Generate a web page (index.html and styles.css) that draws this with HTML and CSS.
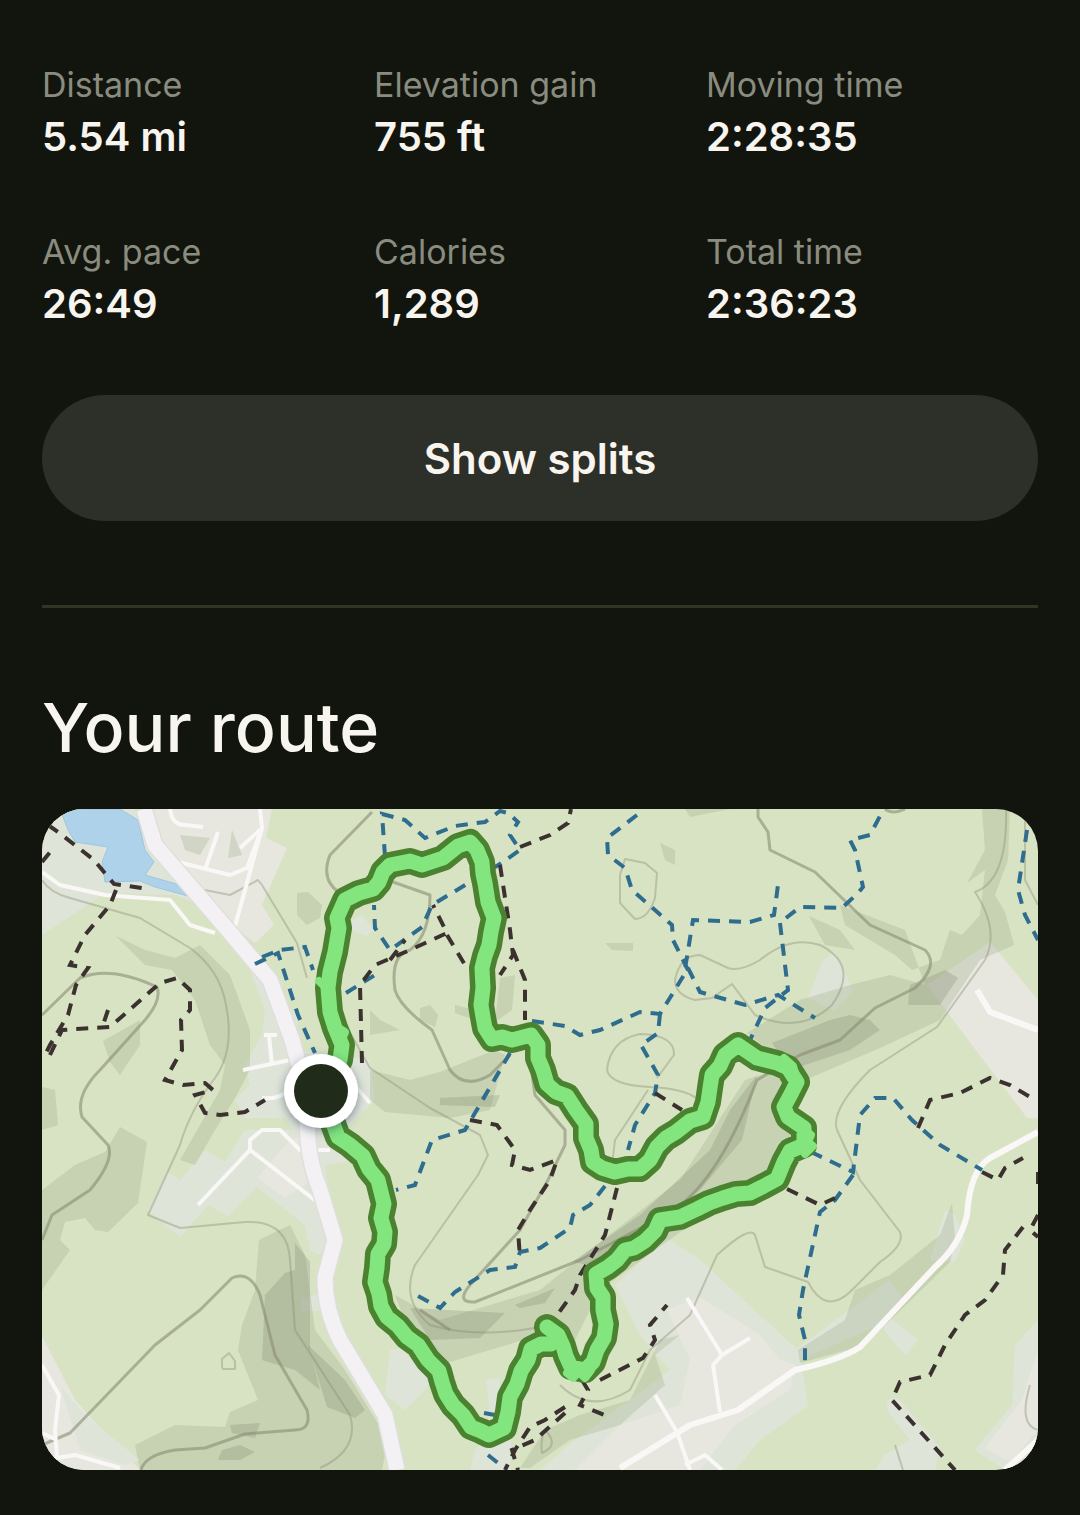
FILE: index.html
```html
<!DOCTYPE html>
<html lang="en">
<head>
<meta charset="utf-8">
<meta name="viewport" content="width=device-width, initial-scale=1">
<title>Activity</title>
<link rel="stylesheet" href="styles.css">
</head>
<body>
<main class="activity">
  <dl class="stats">
    <div class="stat"><dt>Distance</dt><dd>5.54 mi</dd></div>
    <div class="stat"><dt>Elevation gain</dt><dd>755 ft</dd></div>
    <div class="stat"><dt>Moving time</dt><dd>2:28:35</dd></div>
    <div class="stat"><dt>Avg. pace</dt><dd>26:49</dd></div>
    <div class="stat"><dt>Calories</dt><dd>1,289</dd></div>
    <div class="stat"><dt>Total time</dt><dd>2:36:23</dd></div>
  </dl>
  <button class="splits" type="button">Show splits</button>
  <hr class="divider">
  <section class="route">
    <h2>Your route</h2>
    <svg class="map" viewBox="42 809 996 661" role="img" aria-label="Map of your route">
      <defs>
        <filter id="marker-shadow" x="-50%" y="-50%" width="200%" height="200%">
          <feDropShadow dx="0" dy="3" stdDeviation="5" flood-color="#23364a" flood-opacity=".5"/>
        </filter>
        <path id="track" d="M321 1091 340 1060 342 1045 335 1028 330 1012 328 988 330 972 335 952 339 928 337 918 345 900 359 893 373 889 379 882 383 872 390 865 410 861 422 865 443 858 458 846 470 842 477 850 482 862 483 874 485 883 488 902 494 918 491 932 489 945 485 956 482 968 483 988 481 1005 483 1017 485 1028 492 1039 502 1037 512 1040 531 1035 538 1045 538 1058 543 1070 547 1084 556 1092 567 1096 576 1110 586 1124 586 1138 591 1150 593 1162 602 1168 615 1172 628 1169 640 1169 650 1160 657 1147 666 1138 676 1132 690 1121 703 1117 708 1102 710 1088 712 1075 720 1066 725 1055 738 1045 757 1058 777 1063 788 1068 797 1082 791 1094 784 1107 788 1117 804 1128 804 1145 790 1151 784 1162 777 1179 764 1186 750 1193 736 1194 723 1198 709 1203 697 1209 680 1217 660 1220 655 1231 645 1241 634 1248 625 1250 617 1260 608 1267 596 1274 597 1288 603 1297 603 1310 606 1324 604 1338 597 1350 593 1362 585 1370 571 1367 566 1356 563 1346 558 1335 547 1327M551 1344 541 1344 531 1349 528 1360 521 1371 517 1384 510 1397 508 1412 504 1428 489 1435 481 1431 471 1427 463 1415 453 1405 446 1394 442 1382 439 1371 428 1360 418 1345 407 1337 398 1326 387 1317 381 1306 379 1294 375 1282 377 1268 378 1254 384 1244 385 1232 381 1218 384 1204 381 1192 378 1180 369 1169 363 1156 350 1145 338 1137 321 1091"/>
      </defs>
      <rect class="land" x="42" y="809" width="996" height="661"/>

      <!-- built-up areas -->
      <g class="town">
        <path d="M42 809H135L150 850 200 905 175 895 105 893 42 935Z"/>
        <path class="built" d="M150 809H272L266 838 287 848 262 905 274 925 255 943 232 925 195 880 165 845Z"/>
        <path d="M230 945 262 958 275 990 298 1018 295 1050 370 1060 375 1100 340 1135 300 1140 285 1118 245 1118 235 1100 250 1085 245 1065 262 1035 265 1010 250 970Z"/>
        <path d="M245 1130 345 1130 370 1150 372 1158 325 1165 330 1200 335 1235 320 1255 310 1250 305 1225 257 1187 228 1216 208 1205 180 1237 148 1210 168 1172 180 1181 205 1150 225 1162Z"/>
        <path class="built" d="M290 1140 310 1135 312 1180 285 1198 257 1178Z"/>
        <path d="M301 1298 325 1293 327 1310 301 1312Z"/>
        <path class="built" d="M42 1336 75 1400 90 1417 140 1470H42Z"/>
        <path d="M60 1385 85 1415 140 1460 125 1465 80 1450Z"/>
        <path d="M390 1350 400 1348 430 1375 430 1385 405 1410 385 1395Z"/>
        <path d="M486 1380 500 1378 497 1410 512 1430 510 1470H470L475 1450 492 1430Z"/>
        <path d="M615 1285 667 1238 700 1260 800 1352 808 1406 760 1440 735 1470H540L575 1440 670 1370 640 1335Z"/>
        <path class="built" d="M667 1310 700 1297 760 1335 780 1360 795 1365 790 1390 735 1425 700 1470H575L620 1425 680 1405 690 1360Z"/>
        <path d="M835 951 853 991 835 1011 808 998 822 962Z"/>
        <path class="built" d="M927 985 990 942 1038 1000V1118L1027 1118Z"/>
        <path d="M1038 1320 1015 1345 1012 1405 975 1450 1005 1470H1038Z"/>
        <path class="built" d="M1038 1350 1022 1400 985 1448 1010 1462 1038 1430Z"/>
        <path d="M887 1400 898 1398 925 1430 940 1448 935 1470H875L885 1455 910 1440 887 1410Z"/>
        <path d="M860 1302 888 1280 905 1300 890 1318 918 1340 905 1355 880 1325 800 1360 795 1350Z"/>
        <path d="M945 1210 955 1215 965 1240 955 1262 930 1260Z"/>
        <path d="M352 920 362 915 373 930 366 936 352 930Z"/>
      </g>

      <!-- steep ground -->
      <g class="slope">
        <path d="M116 936 145 950 175 958 200 945 230 975 250 1030 250 1070 235 1098 215 1130 195 1165 180 1160 220 1090 225 1065 210 1045 195 1000 172 970 145 965Z"/>
        <path d="M42 1087 55 1090 58 1125 42 1130ZM103 1041 140 1020 140 1045 120 1075 110 1062ZM297 893 308 892 322 905 320 918 307 925 297 915Z"/>
        <path d="M120 1127 147 1142 138 1203 108 1232 95 1230 85 1218 65 1222 60 1240 70 1250 42 1290V1190L75 1165 105 1152Z"/>
        <path d="M259 1240 290 1225 305 1255 315 1330 345 1370 388 1440 382 1470H140L135 1445 175 1425 225 1427 230 1412 258 1400 238 1350 242 1325 255 1290Z"/>
        <path d="M370 1035 400 1030 380 1020 370 1010ZM420 1008 430 1005 438 1015 435 1027 420 1020ZM455 1005 475 1010 480 1022 455 1013Z"/>
        <path d="M370 1070 410 1080 440 1072 495 1050 505 1055 490 1110 450 1118 385 1112 370 1100Z"/>
        <path d="M500 978 515 975 512 1010 495 1022Z"/>
        <path d="M395 1295 440 1320 540 1290 590 1250 680 1180 745 1080 790 1065 785 1115 800 1140 750 1190 690 1225 600 1290 575 1340 540 1335 440 1365 410 1335Z"/>
        <path d="M747 1033 800 1000 850 985 890 975 925 985 905 930 840 905 845 925 895 955 912 970 940 960 950 930 962 935 980 915 985 870 967 883 985 850 982 809H1010L1008 860 995 895 1005 912 1014 945 980 960 940 1020 880 1048 805 1080Z"/>
        <path d="M809 916 840 930 855 950 825 945ZM605 943 633 943 633 951 612 950ZM660 843 675 850 675 865 665 860ZM685 809H730L690 817Z"/>
        <path d="M855 1290 890 1275 940 1235 952 1203 955 1240 950 1262 865 1345 800 1363 798 1350 845 1320Z"/>
        <path d="M630 1400 660 1340 680 1335 655 1355 665 1385 620 1425 570 1440 530 1468H520L545 1430 580 1415Z"/>
        <path d="M180 835 210 838 200 855 185 850ZM232 830 242 855 228 858Z"/>
      </g>
      <g class="slope-deep">
        <path d="M295 1243 310 1262 310 1350 320 1390 295 1370 262 1360 265 1295 285 1273 295 1270Z"/>
        <path d="M308 1345 345 1380 365 1410 355 1418 327 1407ZM230 1425 260 1423 255 1438 232 1433ZM222 1450 240 1445 255 1452 240 1460 218 1460Z"/>
        <path d="M410 1308 505 1313 480 1338 430 1340ZM515 1305 555 1288 545 1303 520 1308ZM440 1098 500 1095 495 1107 440 1105Z"/>
        <path d="M572 1262 640 1215 710 1150 730 1110 757 1075 742 1140 700 1190 640 1240 590 1265Z"/>
        <path d="M772 1043 830 1020 850 1015 870 1020 880 1030 850 1050 790 1070ZM910 985 945 970 958 978 940 1005 908 1005Z"/>
      </g>

      <!-- lakes -->
      <path class="water" d="M60 809H120L138 820 145 850 154 862 145 875 180 885 188 896 155 887 140 881 105 882 102 862 108 847 75 842 68 830Z"/>

      <!-- height lines -->
      <g class="contour">
        <path d="M42 880Q50 893 70 898L140 918 190 948Q220 970 226 1005Q235 1050 215 1078Q190 1110 180 1145L148 1215 180 1228 245 1222Q288 1220 290 1260L295 1330 350 1415Q360 1450 320 1468"/>
        <path d="M180 885 230 895 258 880 262 885 297 943 307 978"/>
        <path d="M340 1015 370 1068 430 1108 480 1135 488 1155 478 1175 415 1265Q400 1300 430 1325Q480 1340 550 1325"/>
        <path d="M625 859 645 863 657 873 655 898Q648 919 635 919L620 903V875Z"/>
        <path d="M607 1070Q610 1040 640 1034 675 1035 674 1055L657 1078M607 1070Q610 1085 650 1087 720 1090 700 1130M648 1090 615 1140 612 1165"/>
        <path d="M675 980Q680 955 700 955L728 968Q740 972 760 960 790 935 820 945 860 965 832 1005 800 1035 755 1015L732 984 712 998 695 1000Q675 995 675 980Z"/>
        <path d="M1006 809Q1008 880 975 892 1000 930 985 960L937 1027 870 1070Q830 1110 837 1130L860 1180 900 1232Q905 1245 880 1262L850 1292Q825 1315 808 1282L765 1267 755 1235Q750 1225 717 1255L690 1315 650 1350 630 1390Q590 1415 560 1385"/>
        <path d="M1025 809V880L1038 905M1030 1385Q1018 1425 1038 1430M895 1445 903 1470M545 1430Q560 1445 542 1453 540 1440 545 1430"/>
        <path d="M222 1367V1359L229 1353 235 1361V1369H223Z"/>
      </g>
      <g class="contour major">
        <path d="M42 1015 80 978Q110 965 157 987 162 1000 145 1020L100 1070Q75 1095 82 1117L108 1145Q115 1160 90 1190L52 1215 42 1240"/>
        <path d="M42 1445 70 1433 155 1345 200 1310 232 1278Q250 1270 260 1295L275 1355 307 1410Q312 1430 295 1430L245 1434 205 1448 175 1450Q145 1455 141 1470"/>
        <path d="M372 812 330 855Q320 880 340 893M393 882 430 895Q430 935 410 950 390 955 395 990 400 1007 432 1030L450 1070Q465 1090 490 1075L510 1055"/>
        <path d="M530 1060 535 1095 565 1130V1145L548 1180 520 1230 470 1285Q455 1303 475 1302L580 1260 665 1215Q715 1190 757 1080L800 1055 840 1040 875 1008 915 988Q940 965 925 950L870 925 815 872 770 850 768 832 758 817V809"/>
        <path d="M885 809Q893 815 905 809M420 1310 450 1330"/>
      </g>

      <!-- roads -->
      <g class="road">
        <path d="M42 872 60 885 105 895 170 900 190 925 215 933M170 860 230 875 247 868 262 828M260 809 262 828 234 930M170 809Q172 825 185 825L203 827M206 867 218 832M260 830 240 848"/>
        <path d="M264 1035H277M269 1035 272 1065M243 1070 290 1060M262 1098Q280 1100 288 1090M350 1080 370 1103M198 1205 250 1150 250 1140 262 1130H280L300 1150H330M250 1150 325 1208"/>
        <path d="M42 1365 59 1395 55 1430 57 1458 75 1455 120 1468M42 1433 57 1440"/>
        <path class="lane" d="M1038 1132 990 1158Q970 1170 967 1215 960 1245 935 1267L860 1347Q840 1360 795 1370L738 1410 690 1425 620 1468"/>
        <path class="lane" d="M977 990 990 1012 1038 1030M1038 1440 1005 1470"/>
        <path d="M687 1298 722 1355 750 1338M722 1355 713 1365 720 1412M655 1395 677 1432 690 1470M685 1465 705 1455 722 1470"/>
      </g>
      <path class="highway edge" d="M144 809 155 845 228 930 270 980 292 1040 306 1091 308 1140Q310 1165 320 1190L335 1240 325 1278Q325 1310 340 1340L385 1415 397 1470"/>
      <path class="highway" d="M144 809 155 845 228 930 270 980 292 1040 306 1091 308 1140Q310 1165 320 1190L335 1240 325 1278Q325 1310 340 1340L385 1415 397 1470"/>

      <!-- bridleways -->
      <g class="path bridle">
        <path d="M255 964 278 953 298 1015 315 1053M262 957 280 950 305 947 313 970M346 993 375 975"/>
        <path d="M385 856 382 814 405 820 425 838 455 826 485 822 500 811 508 813 518 822 510 835 520 850 500 864 432 905 422 927 390 950 375 928 374 905"/>
        <path d="M532 1021 565 1026 580 1035 600 1030 640 1012 660 1014 684 975 693 920 750 922 774 915 778 885M660 1014 658 1033 641 1045 658 1075 655 1093 635 1125 628 1150M688 968 700 992 745 1005 778 995 815 1018M688 970 673 940 672 925 632 890 625 868 608 855 607 838 637 815V809"/>
        <path d="M780 923 788 990 765 1008 750 1040M786 918 800 907 842 908 858 893 863 887 855 850 850 840 870 835 880 816"/>
        <path d="M1027 830 1018 890 1025 915 1038 940"/>
        <path d="M510 1053 465 1130 432 1140 415 1185 396 1190M605 1186 590 1205 573 1215 570 1228 540 1248 520 1252 515 1267 490 1270 455 1292 440 1308 418 1296"/>
        <path d="M811 1152 853 1172 860 1115 875 1098 893 1098 912 1120 940 1145 982 1170M853 1175 835 1200 820 1212 803 1290 799 1315 805 1340V1367M484 1413 495 1415M488 1455 498 1463"/>
      </g>

      <!-- footpaths -->
      <g class="path foot">
        <path d="M42 862 55 846M48 825 58 832 94 860 114 884 148 889M116 890 110 905 85 935 70 965 88 968 76 985 68 1015 50 1045 45 1055M50 1055 62 1030 110 1027 160 983 177 978 190 990 190 1010 181 1020 182 1050 165 1080 183 1085 205 1083 213 1090 195 1095 205 1113 220 1115 245 1112 265 1100M108 1010 103 1025"/>
        <path d="M362 1063 360 985 375 965 410 950 447 933 433 905M447 935 468 970M390 960 405 940M500 865 510 930 513 955 500 975M513 950 525 980V1020M520 847 550 835 568 823 571 809"/>
        <path d="M470 1120 497 1125 515 1150 512 1165 530 1170 557 1160 550 1180 530 1210 518 1230 520 1258M617 1188 605 1235 580 1275 575 1290 550 1325M655 1093 682 1110"/>
        <path d="M600 1380 643 1358 655 1340 650 1325 667 1305M582 1380 588 1390 580 1405 607 1416M565 1407 545 1420 530 1427 515 1450 505 1470M565 1413 535 1440 512 1450 518 1470"/>
        <path d="M787 1189 820 1205 835 1198M918 1128 930 1100 960 1093 990 1078 1010 1085 1035 1100M982 1172 998 1180 1005 1168 1023 1158M1038 1172V1190M1038 1215 1030 1230 1038 1237M1023 1227 1005 1250 1003 1275 985 1300 965 1315 945 1345 930 1375 900 1382 892 1400 955 1470"/>
      </g>

      <!-- recorded track -->
      <g class="track">
        <use href="#track" class="casing"/>
        <use href="#track" class="line"/>
        <path class="spur" d="M784 1058 793 1066 795 1073M803 1128 811 1135 808 1142 813 1146 805 1154M567 1373 573 1378 579 1372 585 1378 591 1370M319 981 326 988M339 1028 345 1032 341 1042"/>
      </g>
      <circle class="marker-ring" cx="321" cy="1091" r="37" filter="url(#marker-shadow)"/>
      <circle class="marker-dot" cx="321" cy="1091" r="27"/>
    </svg>
  </section>
</main>
</body>
</html>
```
FILE: styles.css
```css
* {
  box-sizing: border-box;
}

body {
  margin: 0;
  background: #12140e;
  color: #f8f4ee;
  font-family: Inter, "Open Sans", sans-serif;
}

.activity {
  padding: 61px 42px 45px;
}

.stats {
  display: grid;
  grid-template-columns: repeat(3, 1fr);
  row-gap: 63px;
  margin: 0;
}

.stat dt {
  color: #898c7e;
  font-size: 34px;
  line-height: 48px;
}

.stat dd {
  margin: 0;
  font-size: 40px;
  font-weight: 600;
  line-height: 56px;
}

.splits {
  display: block;
  width: 100%;
  height: 126px;
  margin-top: 63px;
  border: 0;
  border-radius: 63px;
  background: #2d2f29;
  color: inherit;
  font-family: inherit;
  font-size: 42px;
  font-weight: 600;
}

.divider {
  height: 3px;
  margin: 84px 0 77px;
  border: 0;
  background: #323426;
}

.route h2 {
  margin: 0 0 40px;
  font-size: 68px;
  font-weight: 500;
  line-height: 84px;
}

.map {
  display: block;
  width: 100%;
  height: auto;
  border-radius: 42px;
}

.land {
  fill: #d8e3c4;
}

.town path {
  fill: #dfe4d9;
}

.town .built {
  fill: #e7e7df;
}

.slope {
  fill: #8f9f7c;
  fill-opacity: 0.25;
}

.slope-deep {
  fill: #7d8069;
  fill-opacity: 0.25;
}

.water {
  fill: #aed2ea;
  stroke: #9cc6df;
}

.contour {
  fill: none;
  stroke: #8b8c73;
  stroke-opacity: 0.4;
  stroke-width: 2;
  stroke-linejoin: round;
}

.contour.major {
  stroke-opacity: 0.6;
  stroke-width: 3;
}

.road {
  fill: none;
  stroke: #f9f8f7;
  stroke-width: 4;
  stroke-linejoin: round;
}

.road .lane {
  stroke-width: 6;
}

.highway {
  fill: none;
  stroke: #f3f1f3;
  stroke-width: 15;
  stroke-linejoin: round;
}

.highway.edge {
  stroke: #dedfda;
  stroke-width: 18;
}

.path {
  fill: none;
  stroke-width: 4;
  stroke-dasharray: 12 9;
}

.bridle {
  stroke: #2f6d8e;
}

.foot {
  stroke: #3b3230;
}

.track {
  fill: none;
  stroke-linejoin: round;
  stroke-linecap: round;
}

.track .casing {
  stroke: #4a8230;
  stroke-width: 26;
}

.track .line {
  stroke: #82e57e;
  stroke-width: 15;
}

.spur {
  stroke: #82e57e;
  stroke-width: 8;
}

.marker-ring {
  fill: #fff;
}

.marker-dot {
  fill: #202b19;
}
```
